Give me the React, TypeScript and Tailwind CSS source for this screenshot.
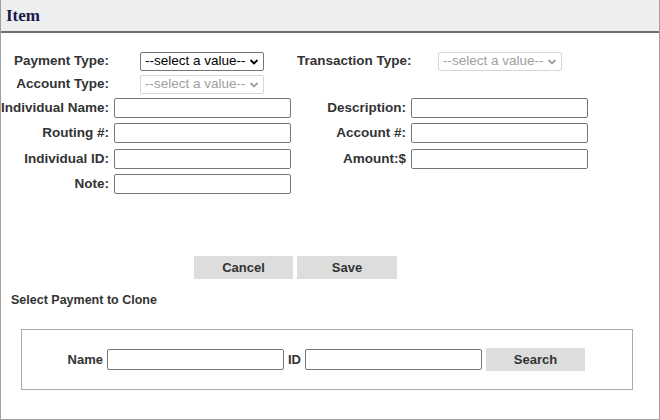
import React from "react";

const lab = "font-bold text-[13.5px] text-[#333]";
const inp = "h-[20px] w-[177px] border border-[#767676] rounded-[2px] bg-white";

function Sel({ disabled }: { disabled?: boolean }) {
  return (
    <div
      className={
        "h-[19px] w-[124px] rounded-[2px] border flex items-center justify-between px-[4px] text-[13.5px] " +
        (disabled ? "border-[#d6d6d6] text-[#a0a0a0]" : "border-[#767676] text-black")
      }
    >
      <span>--select a value--</span>
      <svg width="10" height="8" viewBox="0 0 10 8">
        <path d="M1.5 2 L5 5.5 L8.5 2" fill="none" stroke={disabled ? "#a0a0a0" : "#000"} strokeWidth="1.8" />
      </svg>
    </div>
  );
}

export default function App() {
  return (
    <div className="w-[660px] h-[420px] bg-white border-x border-b border-[#a0a0a0] overflow-hidden" style={{ fontFamily: "Arial, 'Liberation Sans', sans-serif" }}>
      <div className="h-[33px] bg-[#eeeeee] border-b-2 border-[#707070] flex items-center pl-[5px]">
        <span className="font-bold text-[17px] text-[#1a1a4a]" style={{ fontFamily: "'Liberation Serif', serif" }}>Item</span>
      </div>
      <div className="pt-[19px]">
        <div className="flex items-center h-[19px]">
          <div className={lab + " w-[108px] text-right"}>Payment Type:</div>
          <div className="ml-[31px]"><Sel /></div>
          <div className={lab + " ml-[33px] w-[141px] text-left"}>Transaction Type:</div>
          <Sel disabled />
        </div>
        <div className="flex items-center h-[19px] mt-[4px]">
          <div className={lab + " w-[108px] text-right"}>Account Type:</div>
          <div className="ml-[31px]"><Sel disabled /></div>
        </div>
        <div className="flex flex-col gap-[5px] mt-[4px]">
          {[
            ["Individual Name:", "Description:"],
            ["Routing #:", "Account #:"],
            ["Individual ID:", "Amount:$"],
            ["Note:", ""],
          ].map(([a, b]) => (
            <div key={a} className="flex items-center">
              <div className={lab + " w-[108px] text-right whitespace-nowrap"}>{a}</div>
              <div className={inp + " ml-[5px]"} />
              {b && (
                <>
                  <div className={lab + " w-[115px] text-right"}>{b}</div>
                  <div className={inp + " ml-[5px]"} />
                </>
              )}
            </div>
          ))}
        </div>
        <div className="flex gap-[4px] ml-[193px] mt-[62px]">
          <div className="w-[99px] h-[23px] bg-[#dddddd] flex items-center justify-center font-bold text-[13px] text-[#333]">Cancel</div>
          <div className="w-[100px] h-[23px] bg-[#dddddd] flex items-center justify-center font-bold text-[13px] text-[#333]">Save</div>
        </div>
        <div className="ml-[10px] mt-[12px] font-bold text-[12.5px] text-[#333]">Select Payment to Clone</div>
        <div className="ml-[20px] mt-[19px] w-[612px] h-[61px] border border-[#aaaaaa] flex items-center">
          <div className="w-[81px] text-right font-bold text-[13px] text-[#333]">Name</div>
          <div className={inp + " ml-[4px] h-[21px]"} />
          <div className="ml-[4px] w-[17px] font-bold text-[13px] text-[#333]">ID</div>
          <div className={inp + " h-[21px]"} />
          <div className="ml-[4px] w-[99px] h-[23px] bg-[#dddddd] flex items-center justify-center font-bold text-[13px] text-[#333]">Search</div>
        </div>
      </div>
    </div>
  );
}
